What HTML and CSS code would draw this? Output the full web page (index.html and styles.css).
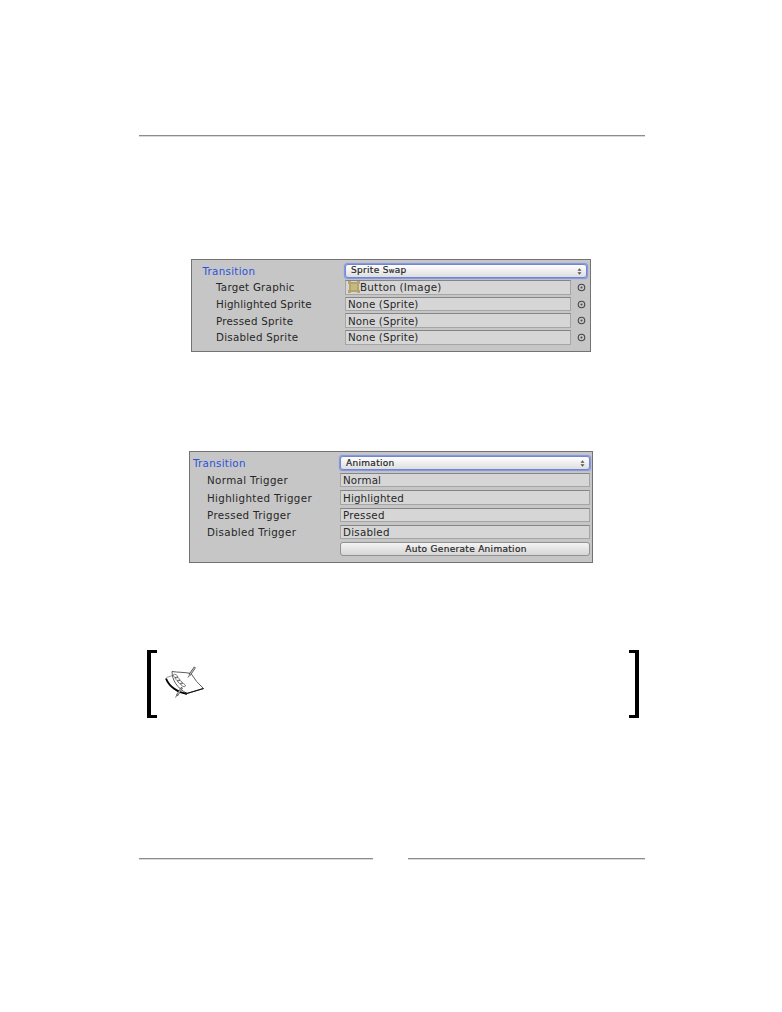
FILE: index.html
```
<!DOCTYPE html>
<html lang="en">
<head>
<meta charset="utf-8">
<title>Button transitions</title>
<link rel="stylesheet" href="styles.css">
</head>
<body>
<main class="page">
  <hr class="rule">
  <section class="panel swap">
    <div class="row"><span class="label lead">Transition</span><div class="select"><span class="opt-swap">Sprite S<small>w</small>ap</span><svg class="arrows" viewBox="0 0 6 8"><path d="M3 0 5.4 3.1H.6zM3 8 .6 4.9h4.8z"/></svg></div></div>
    <div class="row"><span class="label wide">Target Graphic</span><div class="field wide"><svg class="sprite" viewBox="0 0 12 12"><path d="M0 0h3v1h6V0h3v3h-1v6h1v3H9v-1H3v1H0V9h1V3H0z" fill="#b5a56c"/><path d="M3 3h6v6H3z" fill="#c6b97f"/></svg><span>Button (Image)</span></div><svg class="picker" viewBox="0 0 8 8"><circle cx="4" cy="4" r="2.9"/><circle class="dot" cx="4" cy="4" r=".9"/></svg></div>
    <div class="row"><span class="label">Highlighted Sprite</span><div class="field">None (Sprite)</div><svg class="picker" viewBox="0 0 8 8"><circle cx="4" cy="4" r="2.9"/><circle class="dot" cx="4" cy="4" r=".9"/></svg></div>
    <div class="row"><span class="label wide">Pressed Sprite</span><div class="field">None (Sprite)</div><svg class="picker" viewBox="0 0 8 8"><circle cx="4" cy="4" r="2.9"/><circle class="dot" cx="4" cy="4" r=".9"/></svg></div>
    <div class="row"><span class="label wide">Disabled Sprite</span><div class="field">None (Sprite)</div><svg class="picker" viewBox="0 0 8 8"><circle cx="4" cy="4" r="2.9"/><circle class="dot" cx="4" cy="4" r=".9"/></svg></div>
  </section>
  <section class="panel anim">
    <div class="row"><span class="label lead">Transition</span><div class="select"><span>Animation</span><svg class="arrows" viewBox="0 0 6 8"><path d="M3 0 5.4 3.1H.6zM3 8 .6 4.9h4.8z"/></svg></div></div>
    <div class="row"><span class="label">Normal Trigger</span><div class="field">Normal</div></div>
    <div class="row"><span class="label">Highlighted Trigger</span><div class="field">Highlighted</div></div>
    <div class="row"><span class="label">Pressed Trigger</span><div class="field wide">Pressed</div></div>
    <div class="row"><span class="label">Disabled Trigger</span><div class="field wide">Disabled</div></div>
    <div class="row"><span class="label"></span><div class="button">Auto Generate Animation</div></div>
  </section>
  <aside class="note">
    <svg class="notepad" viewBox="0 0 42 36">
      <path d="M8 5.500C14 6.500 20 6 27 7.500Q32 16 39.500 22.500L23 27.500C13 22 8 14 8 5.500z" fill="#fff" stroke="#333" stroke-width=".8"/>
      <path d="M2 12.500C5 20.500 14 27 23 27.800" fill="none" stroke="#000" stroke-width="1.900"/>
      <path d="M21 28 39.500 22.500" stroke="#111" stroke-width="1.100"/>
      <path d="M2.500 11.500 8.500 9.500" fill="none" stroke="#555" stroke-width=".6"/>
      <g fill="none" stroke="#444" stroke-width=".6"><ellipse cx="11.500" cy="10" rx="2.500" ry="1.400" transform="rotate(30 11.500 10)"/><ellipse cx="13.500" cy="13" rx="2.700" ry="1.400" transform="rotate(30 13.500 13)"/><ellipse cx="16" cy="16" rx="2.700" ry="1.400" transform="rotate(30 16 16)"/><ellipse cx="19" cy="18.800" rx="2.700" ry="1.400" transform="rotate(30 19 18.800)"/></g>
      <path d="M25.500 9 31 1.200M18 21.500 13 29.500" stroke="#444" stroke-width="2.200"/>
      <path d="M25.700 8.700 30.700 1.600M17.500 22.300 13.500 28.700" stroke="#bbb" stroke-width="1.100"/>
      <path d="M25.500 9 24 11.500M13 29 11.500 31.500" stroke="#333" stroke-width=".7"/>
    </svg>
  </aside>
  <footer class="footer"><hr class="foot-left"><hr class="foot-right"></footer>
</main>
</body>
</html>
```
FILE: styles.css
```
* { box-sizing: border-box; }
body { margin: 0; background: #fff; font-family: "DejaVu Sans", sans-serif; }
.page { width: 782px; height: 1012px; padding: 135px 137px 0 139px; display: flex; flex-direction: column; }
hr { margin: 0; border: 0; height: 1px; background: #8c8c8c; box-shadow: 0 1px #d9d9d9; flex: none; }
.panel { background: #c6c6c6; border: 1px solid #737373; color: #262626; font-size: 10.300px; letter-spacing: .14px; flex: none; white-space: nowrap; }
.swap { width: 400px; height: 93px; margin: 123px 0 0 52px; padding: 2.300px 3px 0 10px; }
.anim { width: 404px; height: 112px; margin: 99px 0 0 50px; padding: 2.300px 2px 0 3px; }
.row { display: flex; align-items: center; height: 16.700px; }
.anim .row { height: 17.300px; }
.label { width: 143px; padding-left: 14px; flex: none; }
.wide { letter-spacing: .25px; }
.anim .label { width: 147px; padding-left: 14px; letter-spacing: .36px; }
.panel .lead { padding-left: 0; color: #2b50dc; letter-spacing: .3px; }
.swap .lead { padding-left: .5px; }
.field { display: flex; align-items: center; width: 226px; height: 14.500px; padding-left: 2px; background: #d6d6d6; border: 1px solid #a5a5a5; border-top-color: #858585; line-height: 12px; }
.anim .field, .anim .select, .button { width: 250px; }
.select { display: flex; align-items: center; justify-content: space-between; width: 242px; height: 14px; padding: 1px 4px 0 5px; border: 1px solid #6f86d8; border-radius: 3px; box-shadow: 0 0 1px 0.500px #8093df; background: linear-gradient(#fff, #dedede); font-size: 9px; letter-spacing: .3px; line-height: 11px; -webkit-text-stroke: .2px #262626; }
.select small { font-size: 7px; }
.arrows { width: 5px; height: 7px; fill: #555; }
.sprite { width: 12px; height: 12px; }
.picker { width: 9px; height: 9px; margin-left: 6px; fill: none; stroke: #484848; stroke-width: 1; }
.picker .dot { fill: #484848; stroke: none; }
.button { height: 14px; border: 1px solid #919191; border-radius: 3px; background: linear-gradient(#f3f3f3, #d5d5d5); font-size: 9px; letter-spacing: .3px; line-height: 13px; padding-left: 2px; text-align: center; -webkit-text-stroke: .2px #262626; }
.note { width: 492px; height: 68px; margin: 87px 0 0 8px; padding: 16px 0 0 13px; border: solid #000; border-width: 0 4px; flex: none; background: linear-gradient(#000, #000) 0 0 / 6px 3px, linear-gradient(#000, #000) 0 100% / 6px 3px, linear-gradient(#000, #000) 100% 0 / 6px 3px, linear-gradient(#000, #000) 100% 100% / 6px 3px; background-repeat: no-repeat; }
.notepad { display: block; width: 42px; height: 36px; }
.footer { display: flex; justify-content: space-between; margin-top: 140px; }
.foot-left { width: 234px; }
.foot-right { width: 237px; }
```
